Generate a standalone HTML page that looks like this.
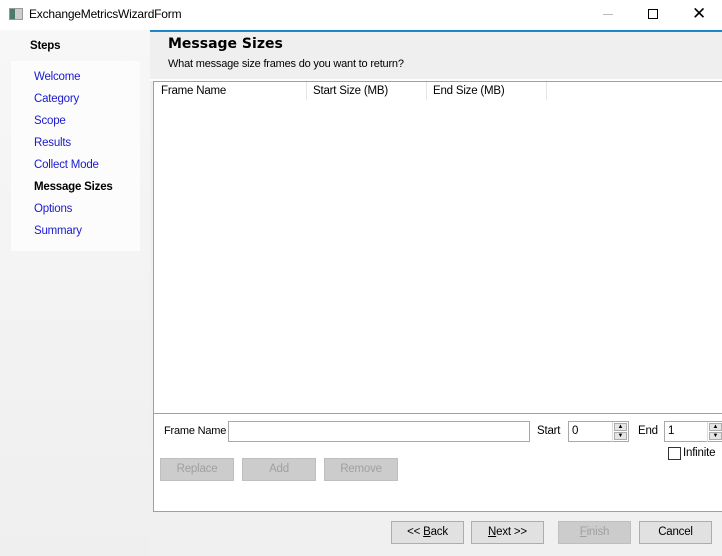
<!DOCTYPE html>
<html><head><meta charset="utf-8"><style>
*{box-sizing:border-box;margin:0;padding:0}
body{width:722px;height:556px;background:#f0f0f0;font-family:"Liberation Sans",sans-serif;font-size:11.5px;color:#000;position:relative;overflow:hidden}
.a{position:absolute}
.t{white-space:nowrap;letter-spacing:-0.2px}
.lnk{color:#1a1ad0}
.btn{position:absolute;height:23px;border:1px solid #adadad;background:#e1e1e1;text-align:center;line-height:21px;letter-spacing:-0.2px}
.dis{background:#cccccc;border-color:#bfbfbf;color:#a0a0a0}
.spin{position:absolute;width:16px;height:20px;border-left:1px solid #ddd}
.spin div{height:8px;margin:1px 1px;background:#e5e5e5;border:1px solid #acacac;font-size:6px;line-height:6px;text-align:center}
</style></head><body>
<div class="a" style="left:0;top:0;width:722px;height:30px;background:#fff"></div>
<div class="a" style="left:9px;top:8px;width:14px;height:12px;background:#ccc;border:1px solid #999"><div style="width:5px;height:10px;background:#4a7a6a"></div></div>
<div class="a t" style="left:29px;top:7px;font-size:12px">ExchangeMetricsWizardForm</div>
<div class="a" style="left:603px;top:14px;width:10px;height:1px;background:#bbb"></div>
<div class="a" style="left:648px;top:9px;width:10px;height:10px;border:1px solid #000"></div>
<div class="a t" style="left:692px;top:4px;font-size:17px">✕</div>

<div class="a" style="left:0;top:30px;width:150px;height:526px;background:linear-gradient(#f7f7f7,#efefef)"></div>
<div class="a t" style="left:30px;top:40px;font-weight:bold">Steps</div>
<div class="a" style="left:11px;top:61px;width:129px;height:190px;background:#fcfcfc"></div>
<div class="a t lnk" style="left:34px;top:71px">Welcome</div>
<div class="a t lnk" style="left:34px;top:93px">Category</div>
<div class="a t lnk" style="left:34px;top:115px">Scope</div>
<div class="a t lnk" style="left:34px;top:137px">Results</div>
<div class="a t lnk" style="left:34px;top:159px">Collect Mode</div>
<div class="a t" style="left:34px;top:181px;font-weight:bold">Message Sizes</div>
<div class="a t lnk" style="left:34px;top:203px">Options</div>
<div class="a t lnk" style="left:34px;top:225px">Summary</div>

<div class="a" style="left:150px;top:30px;width:572px;height:2px;background:#1e87c8"></div>
<div class="a" style="left:150px;top:32px;width:572px;height:47px;background:#efefef"></div>
<div class="a t" style="left:168px;top:36px;font-weight:bold;font-size:14px;font-family:'DejaVu Sans',sans-serif;letter-spacing:0">Message Sizes</div>
<div class="a t" style="left:168px;top:58px;font-size:11px">What message size frames do you want to return?</div>
<div class="a" style="left:150px;top:79px;width:572px;height:2px;background:#fff"></div>
<div class="a" style="left:153px;top:81px;width:569px;height:332px;background:#fff;border-left:1px solid #a0a0a0;border-top:1px solid #a0a0a0"></div>
<div class="a t" style="left:161px;top:85px">Frame Name</div>
<div class="a" style="left:306px;top:82px;width:1px;height:18px;background:#e5e5e5"></div>
<div class="a t" style="left:313px;top:85px">Start Size (MB)</div>
<div class="a" style="left:426px;top:82px;width:1px;height:18px;background:#e5e5e5"></div>
<div class="a t" style="left:433px;top:85px">End Size (MB)</div>
<div class="a" style="left:546px;top:82px;width:1px;height:18px;background:#e5e5e5"></div>

<div class="a" style="left:153px;top:413px;width:569px;height:99px;background:#fff;border:1px solid #a0a0a0;border-right:none"></div>
<div class="a t" style="left:164px;top:425px;font-size:11px">Frame Name</div>
<div class="a" style="left:228px;top:421px;width:302px;height:21px;border:1px solid #a8a8a8;background:#fff"></div>
<div class="a t" style="left:537px;top:425px">Start</div>
<div class="a" style="left:568px;top:421px;width:61px;height:21px;border:1px solid #a8a8a8;background:#fff"><span style="position:absolute;left:3px;top:3px">0</span><div class="spin" style="right:0;top:0"><div>▲</div><div>▼</div></div></div>
<div class="a t" style="left:638px;top:425px">End</div>
<div class="a" style="left:664px;top:421px;width:60px;height:21px;border:1px solid #a8a8a8;background:#fff"><span style="position:absolute;left:3px;top:3px">1</span><div class="spin" style="left:42px;top:0"><div>▲</div><div>▼</div></div></div>
<div class="a" style="left:668px;top:447px;width:13px;height:13px;border:1px solid #333;background:#fff"></div>
<div class="a t" style="left:683px;top:447px">Infinite</div>
<div class="btn dis" style="left:160px;top:458px;width:74px">Replace</div>
<div class="btn dis" style="left:242px;top:458px;width:74px">Add</div>
<div class="btn dis" style="left:324px;top:458px;width:74px">Remove</div>

<div class="btn" style="left:391px;top:521px;width:73px">&lt;&lt; <u>B</u>ack</div>
<div class="btn" style="left:471px;top:521px;width:73px"><u>N</u>ext &gt;&gt;</div>
<div class="btn dis" style="left:558px;top:521px;width:73px"><u>F</u>inish</div>
<div class="btn" style="left:639px;top:521px;width:73px">Cancel</div>
</body></html>
